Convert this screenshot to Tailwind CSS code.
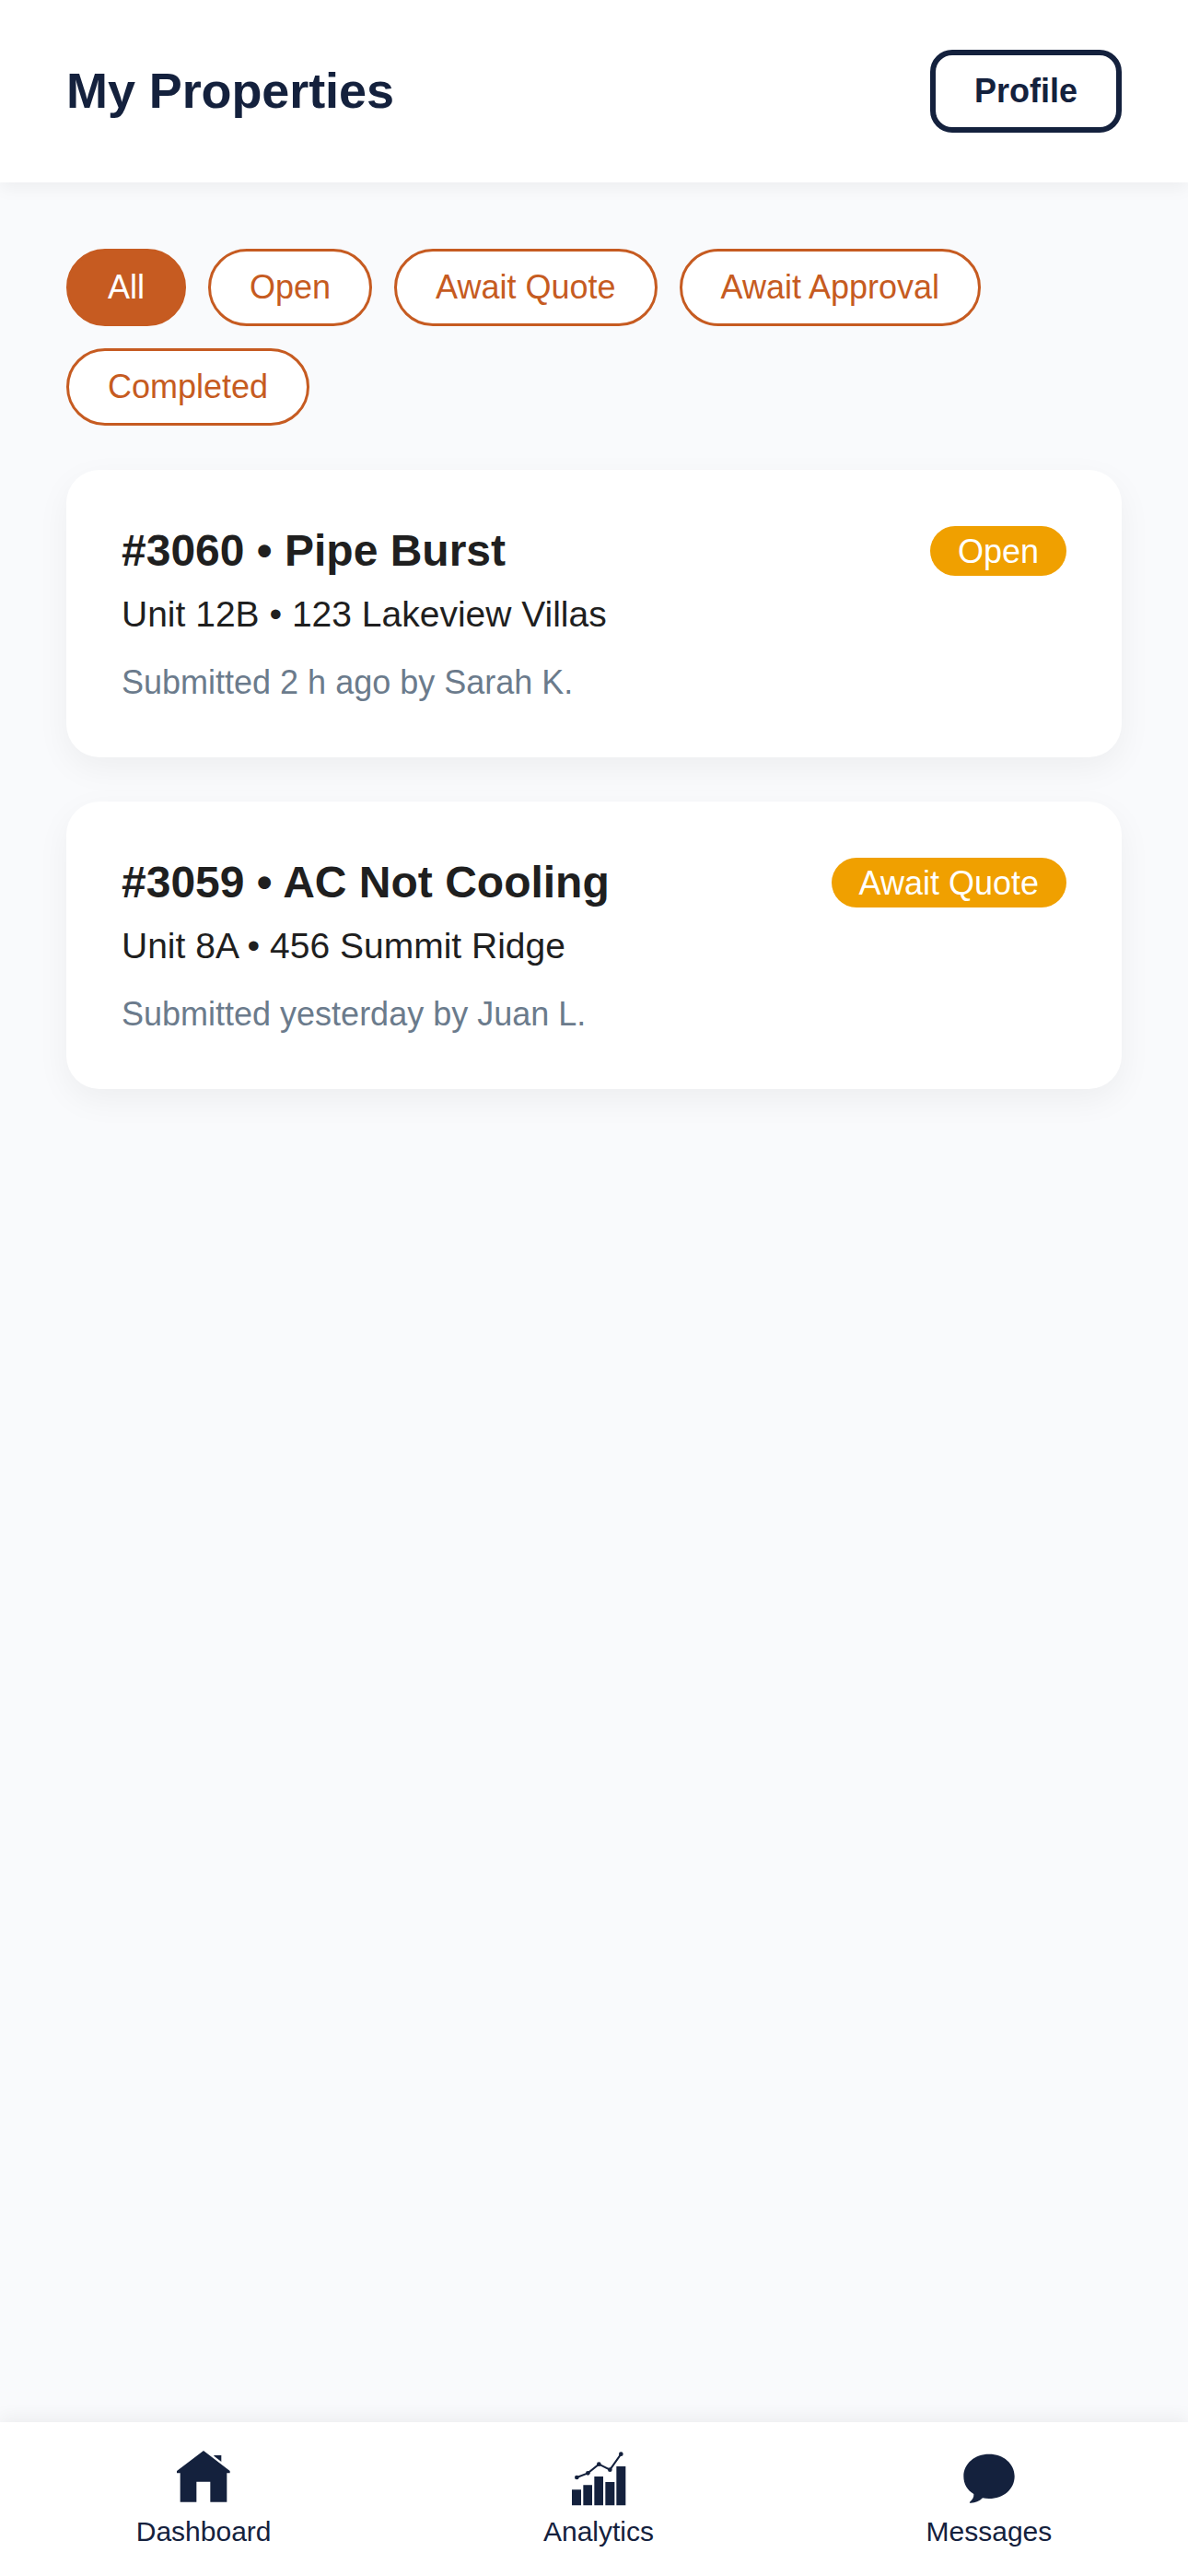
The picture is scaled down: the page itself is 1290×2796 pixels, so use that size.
<!DOCTYPE html>
<html lang="en">
<head>
<meta charset="utf-8">
<title>My Properties</title>
<script src="https://cdn.jsdelivr.net/npm/@tailwindcss/browser@4"></script>
</head>
<body class="flex h-[2796px] w-[1290px] flex-col overflow-hidden bg-[#f9fafc] font-['Liberation_Sans',Arial,sans-serif] text-[#1f1f1f]">
  <header class="flex h-[198px] shrink-0 items-center justify-between bg-white px-[72px] shadow-[0_6px_18px_rgba(0,0,0,0.05)]">
    <h1 class="pb-[3px] text-[54px] leading-[60px] font-bold tracking-[-0.1px] text-[#14213d]">My Properties</h1>
    <button class="h-[90px] rounded-[24px] border-6 border-[#14213d] px-[42px] text-[36px] leading-[42px] font-bold text-[#14213d]">Profile</button>
  </header>

  <main class="flex flex-1 flex-col px-[72px] pt-[72px]">
    <div class="flex flex-wrap gap-6 text-[36px] leading-[42px] text-[#c65b21]">
      <button class="h-[84px] rounded-full border-3 border-[#c65b21] bg-[#c65b21] px-[42px] text-white">All</button>
      <button class="h-[84px] rounded-full border-3 border-[#c65b21] bg-white px-[42px]">Open</button>
      <button class="h-[84px] rounded-full border-3 border-[#c65b21] bg-white px-[42px]">Await Quote</button>
      <button class="h-[84px] rounded-full border-3 border-[#c65b21] bg-white px-[42px]">Await Approval</button>
      <button class="h-[84px] rounded-full border-3 border-[#c65b21] bg-white px-[42px]">Completed</button>
    </div>

    <div class="mt-12 flex flex-col gap-12">
      <article class="h-[312px] rounded-[36px] bg-white p-[60px] shadow-[0_12px_36px_rgba(0,0,0,0.05)]">
        <div class="flex h-[56px] items-start justify-between">
          <h2 class="text-[48px] leading-[55px] font-bold">#3060 • Pipe Burst</h2>
          <span class="mt-[1.4px] h-[54px] rounded-full bg-[#f0a000] px-[30px] text-[36px] leading-[56px] text-white">Open</span>
        </div>
        <p class="mt-[18px] text-[39px] leading-[45px]">Unit 12B • 123 Lakeview Villas</p>
        <p class="mt-[31px] text-[36px] leading-[42px] text-[#6b7b8c]">Submitted 2 h ago by Sarah K.</p>
      </article>
      <article class="h-[312px] rounded-[36px] bg-white p-[60px] shadow-[0_12px_36px_rgba(0,0,0,0.05)]">
        <div class="flex h-[56px] items-start justify-between">
          <h2 class="text-[48px] leading-[55px] font-bold">#3059 • AC Not Cooling</h2>
          <span class="mt-[1.4px] h-[54px] rounded-full bg-[#f0a000] px-[30px] text-[36px] leading-[56px] text-white">Await Quote</span>
        </div>
        <p class="mt-[18px] text-[39px] leading-[45px]">Unit 8A • 456 Summit Ridge</p>
        <p class="mt-[31px] text-[36px] leading-[42px] text-[#6b7b8c]">Submitted yesterday by Juan L.</p>
      </article>
    </div>
  </main>

  <nav class="flex h-[167px] shrink-0 justify-around bg-white pt-[30px] text-[30px] leading-[34px] text-[#14213d] shadow-[0_-6px_18px_rgba(0,0,0,0.05)]">
    <a class="flex flex-col items-center gap-3">
      <svg class="size-[60px]" viewBox="212 178 180 180" fill="currentColor">
        <path d="M302 181L388 247V254H378V348H324V282H279V348H226V254H215V247Z"/>
        <path d="M336 196H360V217L336 198Z"/>
      </svg>
      <span>Dashboard</span>
    </a>
    <a class="flex flex-col items-center gap-3">
      <svg class="size-[60px]" viewBox="178 178 180 180" fill="currentColor" overflow="visible">
        <path d="M181 308H211V359H181ZM218 293H247V359H218ZM254 265H283V359H254ZM290 283H320V359H290ZM326 232H356V359H326Z"/>
        <path d="M197 268L233 254L269 225L305 243L341 192" fill="none" stroke="currentColor" stroke-width="6"/>
        <circle cx="197" cy="268" r="7"/><circle cx="233" cy="254" r="7"/><circle cx="269" cy="225" r="7"/><circle cx="305" cy="243" r="7"/><circle cx="341" cy="192" r="7"/>
      </svg>
      <span>Analytics</span>
    </a>
    <a class="flex flex-col items-center gap-3">
      <svg class="size-[60px]" viewBox="192 178 180 180" fill="currentColor">
        <path d="M282 192C329 192 365 223 365 264C365 306 329 337 282 337Q271 337 261 335C248 347 236 352 219 351Q218 350 219 348C228 341 233 332 232 322C211 309 199 289 199 264C199 223 235 192 282 192Z"/>
      </svg>
      <span>Messages</span>
    </a>
  </nav>
</body>
</html>
